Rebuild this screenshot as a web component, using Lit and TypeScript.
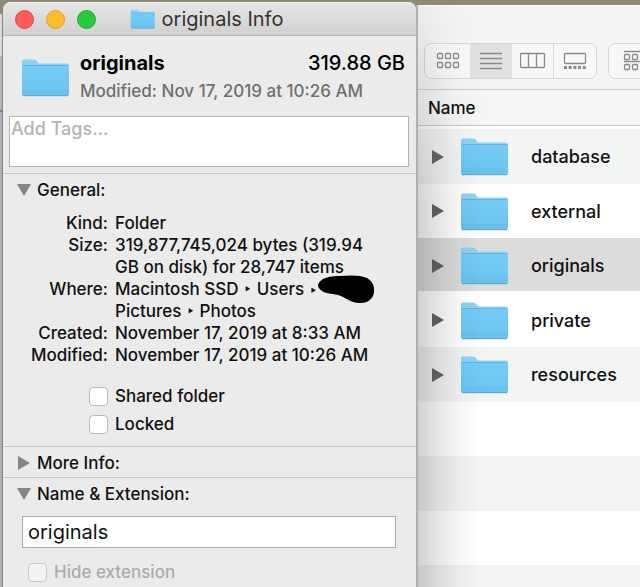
import { LitElement, html, css, svg, nothing } from "lit";
import { customElement, property } from "lit/decorators.js";

@customElement("folder-icon")
class FolderIcon extends LitElement {
  static styles = css`
    :host { display: block; flex: none; width: 48px; height: 39px; }
    svg { display: block; width: 100%; height: 100%; }
  `;
  render() {
    return html`<svg viewBox="0 0 48 39" aria-hidden="true">
      <defs>
        <linearGradient id="front" x1="0" y1="0" x2="0" y2="1">
          <stop offset="0" stop-color="#74cdf8" />
          <stop offset="1" stop-color="#6cc3ee" />
        </linearGradient>
      </defs>
      <path d="M1 3.500Q1 1.500 3 1.500H13Q15 1.500 16 3L17.500 5Q18 5.500 19.500 5.500H46Q48 5.500 48 7.500V12H1Z" fill="#8fd2f2" />
      <path d="M1 9Q1 7 3 7H46Q48 7 48 9V36Q48 38 46 38H3Q1 38 1 36Z" fill="url(#front)" />
      <path d="M2 7.500H47" stroke="#5bb5e2" stroke-width="1" />
      <path d="M1 32.500H48M1 34.500H48" stroke="#5fb6e2" stroke-width=".5" />
      <path d="M2 37.700H47" stroke="#5aa3c8" stroke-width="1" />
    </svg>`;
  }
}

@customElement("disclosure-mark")
class DisclosureMark extends LitElement {
  @property({ type: Boolean }) open = false;
  @property({ type: Boolean }) dark = false;
  static styles = css`
    :host { display: block; flex: none; width: 14px; height: 14px; }
    svg { display: block; }
    .soft { fill: #858585; }
    .dark { fill: #666; }
  `;
  render() {
    const d = this.open ? "M0 1H14L7 13Z" : "M1 0V14L13 7Z";
    return html`<svg width="14" height="14" viewBox="0 0 14 14" aria-hidden="true">
      <path class=${this.dark ? "dark" : "soft"} d=${d} />
    </svg>`;
  }
}

@customElement("info-window")
class InfoWindow extends LitElement {
  static styles = css`
    :host {
      display: flex; flex-direction: column; box-sizing: border-box; min-width: 0;
      background: #ebebeb; border-radius: 8px 8px 0 0; overflow: hidden;
      color: #111; font-size: 17px; line-height: 22px;
    }
    .titlebar, .summary, .tags, section { flex-shrink: 0; }
    .titlebar {
      display: grid; grid-template-columns: 1fr auto 1fr; align-items: center;
      height: 32px; padding: 0 12px; border-bottom: 1px solid #b4b4b4;
      border-top: 1px solid #f4f4f4; background: linear-gradient(#e6e6e6, #d0d0d0);
    }
    .lights { display: flex; gap: 12px; }
    .light { width: 19px; height: 19px; padding: 0; border-radius: 50%; border: 1px solid; }
    .close { background: #fc5b57; border-color: #df4744; }
    .minimise { background: #fdbc2f; border-color: #de9f25; }
    .zoom { background: #28c840; border-color: #1dac2c; }
    .title { display: flex; align-items: center; gap: 7px; margin: 0; padding-right: 6px; font-size: 20px; font-weight: 400; color: #333; }
    .title folder-icon { width: 25px; height: 20px; }
    .summary { display: flex; align-items: center; gap: 11px; padding: 14px 11px 12px 18px; }
    .facts { flex: 1; min-width: 0; }
    .line { display: flex; justify-content: space-between; font-size: 20px; line-height: 26px; color: #000; }
    .modified { margin: 2px 0 0; color: #6f6f6f; line-height: 26px; white-space: nowrap; }
    .tags {
      display: block; box-sizing: border-box; height: 51px; margin: 0 7px 6px 6px; padding: 1px;
      border: 1px solid #b3b3b3; background: #fff; resize: none; font: inherit; font-size: 18px; line-height: 22px; outline: 0;
    }
    .tags::placeholder { color: #b4b4b4; opacity: 1; }
    section { border-top: 1px solid #cacaca; padding-bottom: 11px; }
    section.closed { padding-bottom: 0; }
    .head {
      display: flex; align-items: center; gap: 6px; width: 100%; height: 30px; padding: 2px 14px 0;
      border: 0; background: none; font: inherit; color: #111; text-align: left;
    }
    dl { display: grid; grid-template-columns: 90px 1fr; column-gap: 7px; margin: 8px 0 19px; padding-left: 15px; }
    dt { text-align: right; }
    dd { margin: 0; }
    .hidden-name { position: relative; }
    .hidden-name svg { position: absolute; left: 0; top: -4px; }
    .checks { display: flex; flex-direction: column; gap: 6px; padding-left: 86px; }
    label { display: flex; align-items: center; gap: 7px; }
    .box {
      appearance: none; width: 19px; height: 19px; margin: 0; border: 1px solid #b8b8b8; border-radius: 4px; background: #fff;
    }
    .off { color: #ababab; padding: 13px 25px 0; }
    .off .box { background: #f3f3f3; border-color: #c8c8c8; }
    .name {
      display: block; box-sizing: border-box; width: calc(100% - 39px); height: 32px; margin: 8px 20px 0 19px; padding: 0 5px;
      border: 1px solid #ababab; background: #fff; font: inherit; font-size: 20px; font-weight: 400; color: #111; outline: 0;
    }
  `;

  render() {
    return html`
      <header class="titlebar">
        <div class="lights">
          <button class="light close" aria-label="Close"></button>
          <button class="light minimise" aria-label="Minimise"></button>
          <button class="light zoom" aria-label="Zoom"></button>
        </div>
        <h1 class="title"><folder-icon></folder-icon>originals Info</h1>
      </header>
      <div class="summary">
        <folder-icon></folder-icon>
        <div class="facts">
          <div class="line"><strong>originals</strong><span>319.88 GB</span></div>
          <p class="modified">Modified: Nov 17, 2019 at 10:26 AM</p>
        </div>
      </div>
      <textarea class="tags" aria-label="Tags" placeholder="Add Tags..."></textarea>
      <section>
        <button class="head" aria-expanded="true"><disclosure-mark open></disclosure-mark>General:</button>
        <dl>
          <dt>Kind:</dt><dd>Folder</dd>
          <dt>Size:</dt><dd>319,877,745,024 bytes (319.94<br />GB on disk) for 28,747 items</dd>
          <dt>Where:</dt>
          <dd>Macintosh SSD ‣ Users ‣<span class="hidden-name"><svg width="57" height="29" viewBox="0 0 57 29" aria-hidden="true">
              <path d="M0 10C2 3 11 1 22 1C33 0 43 0 49 3C54 6 56 10 56 14C57 22 51 28 43 28C33 29 28 22 20 20C13 18 8 19 4 16C1 14 0 12 0 10Z" fill="#000" />
            </svg></span><br />Pictures ‣ Photos</dd>
          <dt>Created:</dt><dd>November 17, 2019 at 8:33 AM</dd>
          <dt>Modified:</dt><dd>November 17, 2019 at 10:26 AM</dd>
        </dl>
        <div class="checks">
          <label><input class="box" type="checkbox" />Shared folder</label>
          <label><input class="box" type="checkbox" />Locked</label>
        </div>
      </section>
      <section class="closed">
        <button class="head" aria-expanded="false"><disclosure-mark></disclosure-mark>More Info:</button>
      </section>
      <section>
        <button class="head" aria-expanded="true"><disclosure-mark open></disclosure-mark>Name &amp; Extension:</button>
        <input class="name" type="text" aria-label="Name" value="originals" />
        <label class="off"><input class="box" type="checkbox" disabled />Hide extension</label>
      </section>
    `;
  }
}

const cells = (xs: number[], ys: number[]) =>
  ys.map((y) => xs.map((x) => svg`<rect x=${x} y=${y} width="5" height="5" rx="1" />`));

const views = [
  { label: "Icons", art: svg`${cells([2.5, 10.5, 18.5], [4.5, 13.5])}` },
  { label: "List", art: svg`<path d="M2 4.500H24M2 9.500H24M2 14.500H24M2 19.500H24" />` },
  { label: "Columns", art: svg`<rect x=".5" y="4.500" width="24" height="14" rx="1" /><path d="M8.500 4.500V18.500M16.500 4.500V18.500" />` },
  { label: "Gallery", art: svg`<rect x="2.500" y="4.500" width="21" height="10" rx="1" /><path d="M2 18.500H24" stroke-width="3" stroke-dasharray="3 1.700" />` },
];

@customElement("finder-window")
class FinderWindow extends LitElement {
  static styles = css`
    :host {
      display: flex; flex-direction: column; position: relative; min-width: 0; overflow: hidden;
      background: #fff; color: #111; font-size: 18px;
    }
    .toolbar {
      display: flex; flex: none; align-items: flex-start; gap: 11px; box-sizing: border-box; height: 85px; padding: 37px 0 0 6px;
      background: #f5f5f5; border-bottom: 1px solid #cdcdcd; overflow: hidden; border-top: 1px solid #fff;
    }
    .group { display: flex; flex: none; border: 1px solid #d8d8d8; border-radius: 7px; overflow: hidden; background: #f8f8f8; }
    .view {
      display: flex; align-items: center; justify-content: center; width: 42px; height: 34px; padding: 0;
      border: 0; border-right: 1px solid #d8d8d8; background: none;
    }
    .view.first { width: 45px; border-right: 0; }
    .view:last-child { border-right: 0; }
    .view.on { background: #e1e1e1; border-right: 0; }
    .view svg { flex: none; fill: none; stroke: #8a8a8a; stroke-width: 1.3; }
    table { width: 100%; flex: none; border-collapse: collapse; }
    th {
      height: 35px; padding: 0 0 0 10px; text-align: left; font-size: 17px; font-weight: 500;
      background: #f6f6f6; border-bottom: 1px solid #cacaca;
    }
    .lead td { height: 3px; background: #fff; }
    td { height: 54px; padding: 0; }
    .rows tr:nth-child(odd) td { height: 55px; background: #f3f5f5; }
    .rows tr.selected td { background: linear-gradient(#dcdcdc, #dcdcdc) top / 100% 53px no-repeat #fff; }
    .entry { display: flex; align-items: center; padding-left: 13px; }
    .entry folder-icon { margin: 0 23px 0 15px; }
    .cast {
      position: absolute; inset: 0 auto 0 0; width: 64px; pointer-events: none;
      background: linear-gradient(90deg, rgba(0,0,0,.18), rgba(0,0,0,.1) 30%, rgba(0,0,0,.03) 65%, transparent);
      mask-image: linear-gradient(rgba(0,0,0,.2), #000 200px);
    }
  `;
  private names = ["database", "external", "originals", "private", "resources", "", "", "", ""];

  render() {
    return html`
      <div class="toolbar">
        <div class="group">
          ${views.map((v, i) => html`<button class="view ${i === 0 ? "first" : i === 1 ? "on" : ""}" aria-label=${v.label}>
            <svg width="26" height="24" viewBox="0 0 26 24" aria-hidden="true">${v.art}</svg>
          </button>`)}
        </div>
        <div class="group">
          <button class="view" aria-label="Group">
            <svg width="26" height="24" viewBox="0 0 26 24" aria-hidden="true">
              <path d="M7 2.500H26M7 12.500H26" />${cells([7.5, 15.5], [5.5, 15.5])}
            </svg>
          </button>
        </div>
      </div>
      <table>
        <thead><tr><th scope="col">Name</th></tr></thead>
        <tbody class="lead" aria-hidden="true"><tr><td></td></tr></tbody>
        <tbody class="rows">
          ${this.names.map((n) => html`<tr class=${n === "originals" ? "selected" : ""}><td>
            ${n ? html`<div class="entry"><disclosure-mark dark></disclosure-mark><folder-icon></folder-icon>${n}</div>` : nothing}
          </td></tr>`)}
        </tbody>
      </table>
      <div class="cast"></div>
    `;
  }
}

@customElement("app-root")
class AppRoot extends LitElement {
  static styles = css`
    :host {
      display: grid; grid-template-columns: 3px minmax(0, 413fr) minmax(0, 224fr);
      grid-template-rows: minmax(0, 1fr);
      height: 100vh; overflow: hidden; font-family: Inter, "Liberation Sans", sans-serif;
      font-weight: 450; background: #8f8a76;
    }
    .behind {
      margin-top: 14px; border-right: 1px solid #85878c; box-sizing: border-box;
      background: linear-gradient(#dadada 42px, #b4b4b4 42px, #b4b4b4 96px, #808080 96px, #808080 98px, #adb0b4 98px);
    }
    info-window { margin-top: 2px; }
    finder-window { margin-top: 5px; border-left: 2px solid #afafaf; }
  `;
  render() {
    return html`<div class="behind"></div><info-window></info-window><finder-window></finder-window>`;
  }
}
